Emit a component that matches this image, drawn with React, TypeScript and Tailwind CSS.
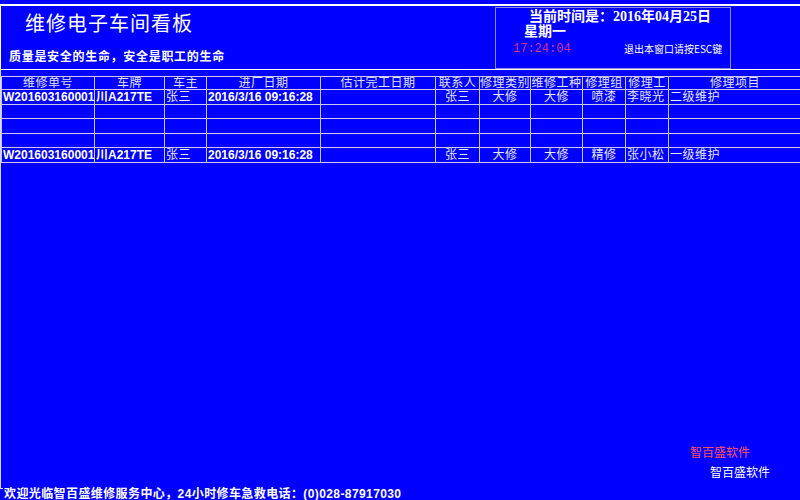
import React from "react";

const serif = { fontFamily: '"Liberation Serif", "Noto Sans CJK SC", serif' };

const cols = [93, 70, 42, 114, 115, 44, 51, 52, 43, 43, 133];
const heads = ["维修单号", "车牌", "车主", "进厂日期", "估计完工日期", "联系人", "修理类别", "维修工种", "修理组", "修理工", "修理项目"];

type Row = string[] | null;
const rows: Row[] = [
  ["W201603160001", "川A217TE", "张三", "2016/3/16 09:16:28", "", "张三", "大修", "大修", "喷漆", "李晓光", "二级维护"],
  null,
  null,
  null,
  ["W201603160001", "川A217TE", "张三", "2016/3/16 09:16:28", "", "张三", "大修", "大修", "精修", "张小松", "一级维护"],
];
const rowH = [15, 14, 15, 14, 15];

function Cell({ v, i }: { v: string; i: number }) {
  if (i === 0 || i === 3) {
    return (
      <td className="border border-[#c8c8f0] px-[1px] text-[12px] font-bold text-white leading-none whitespace-nowrap overflow-hidden" style={{ fontFamily: '"Liberation Sans", Arial, sans-serif' }}>
        {v}
      </td>
    );
  }
  if (i === 1) {
    return (
      <td className="border border-[#c8c8f0] px-[1px] text-[12px] font-bold text-white leading-none whitespace-nowrap overflow-hidden" style={{ fontFamily: '"Liberation Sans", "Noto Sans CJK SC", sans-serif' }}>
        {v}
      </td>
    );
  }
  const left = i === 2 || i === 9 || i === 10;
  return (
    <td className={`border border-[#c8c8f0] px-[1px] text-[12px] text-[#e8e8ff] leading-none whitespace-nowrap overflow-hidden tracking-[0.5px] ${left ? "text-left" : "text-center"}`} style={serif}>
      {v}
    </td>
  );
}

export default function App() {
  return (
    <div className="w-[800px] h-[500px] bg-[#0000ff] overflow-hidden flex flex-col relative" style={serif}>
      {/* header */}
      <div className="mt-[4px] h-[66px] border-t-[2px] border-b border-l border-white flex">
        <div className="w-[494px] flex flex-col">
          <div className="pl-[24px] pt-[5px] text-[20px] leading-[26px] text-white tracking-[1px]" style={serif}>
            维修电子车间看板
          </div>
          <div className="pl-[8px] pt-[13px] text-[12px] leading-[14px] font-bold text-white tracking-[0.7px]">
            质量是安全的生命，安全是职工的生命
          </div>
        </div>
        <div className="w-[236px] h-[62px] mt-[1px] border border-[#8c8cd8] flex flex-col">
          <div className="pl-[33px] pt-[1px] text-[14px] leading-[15px] text-white font-bold">
            当前时间是：2016年04月25日
          </div>
          <div className="pl-[28px] text-[14px] leading-[15px] text-white font-bold">星期一</div>
          <div className="flex items-center mt-[3px]">
            <div className="pl-[17px] w-[128px] text-[12px] leading-[14px] text-[#d8308c]" style={{ fontFamily: '"Liberation Mono", monospace' }}>
              17:24:04
            </div>
            <div className="text-[10px] leading-[12px] text-white" style={{ fontFamily: '"Noto Sans CJK SC", sans-serif' }}>
              退出本窗口请按ESC键
            </div>
          </div>
        </div>
      </div>

      {/* body */}
      <div className="flex-1 flex flex-col border-l border-[#d8d8ff] h-[418px] max-h-[418px]">
        <div className="h-[6px]" />
        <table className="table-fixed border-collapse w-[800px]">
          <colgroup>
            {cols.map((w, i) => (
              <col key={i} style={{ width: w }} />
            ))}
          </colgroup>
          <tbody>
            <tr className="h-[13px]">
              {heads.map((h, i) => (
                <td key={i} className="border border-[#c8c8f0] text-center text-[12px] leading-none text-[#e0e0ff] whitespace-nowrap overflow-hidden p-0 tracking-[0.5px]" style={serif}>
                  {h}
                </td>
              ))}
            </tr>
            {rows.map((r, ri) => (
              <tr key={ri} style={{ height: rowH[ri] }}>
                {r
                  ? r.map((v, i) => <Cell key={i} v={v} i={i} />)
                  : cols.map((_, i) => <td key={i} className="border border-[#c8c8f0]" />)}
              </tr>
            ))}
          </tbody>
        </table>
        <div className="flex-1 flex flex-col items-end pr-[30px] pt-[282px]">
          <div className="text-[12px] leading-[14px] text-[#ff5060] mr-[20px]" style={{ fontFamily: '"Noto Sans CJK SC", sans-serif' }}>
            智百盛软件
          </div>
          <div className="text-[12px] leading-[14px] text-white mt-[6px]" style={{ fontFamily: '"Noto Sans CJK SC", sans-serif' }}>
            智百盛软件
          </div>
        </div>
      </div>
      <div className="h-[12px] relative">
        <div className="absolute left-0 top-0 w-[3px] h-px bg-[#d8d8ff]" />
        <div className="pl-[4px] text-[12px] leading-[12px] font-bold text-white whitespace-nowrap tracking-[0.4px]" style={{ fontFamily: '"Liberation Sans", "Noto Sans CJK SC", sans-serif' }}>
          欢迎光临智百盛维修服务中心，24小时修车急救电话：(0)028-87917030
        </div>
      </div>
    </div>
  );
}
